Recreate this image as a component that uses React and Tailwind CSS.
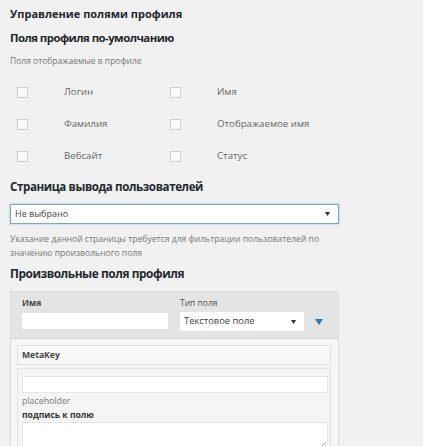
const fields = [
  ["Логин", "Имя"],
  ["Фамилия", "Отображаемое имя"],
  ["Вебсайт", "Статус"],
];

const Check = ({ label }) => (
  <div className="flex items-center h-[32px] pl-[7px]">
    <span className="w-[11px] h-[11px] border border-[#cfcfcf] bg-[#fbfbfb] shrink-0" />
    <span className="ml-[36px] text-[9.7px] text-[#666]">{label}</span>
  </div>
);

const Arrow = () => (
  <svg width="5" height="4" viewBox="0 0 5 4" className="shrink-0">
    <polygon points="0,0 5,0 2.5,4" fill="#333" />
  </svg>
);

export default function App() {
  return (
    <div
      className="min-h-screen bg-[#f1f1f1] pl-[10px] pt-[4px] text-[#23282d]"
      style={{ fontFamily: '"Open Sans", "Noto Sans", sans-serif' }}
    >
      <div className="w-[329px]">
        <h1 className="text-[11px] leading-[20px] font-bold">Управление полями профиля</h1>
        <h2 className="mt-[4px] text-[11.4px] leading-[20px] font-bold tracking-[-0.55px]">Поля профиля по-умолчанию</h2>
        <p className="mt-[6px] text-[8.5px] leading-[14px] text-[#777]">Поля отображаемые в профиле</p>

        <div className="mt-[8px] grid grid-cols-[153px_153px]">
          {fields.map(([a, b]) => (
            <div key={a} className="contents">
              <Check label={a} />
              <Check label={b} />
            </div>
          ))}
        </div>

        <h2 className="mt-[5px] text-[11.6px] leading-[20px] font-bold tracking-[-0.4px]">Страница вывода пользователей</h2>
        <div className="mt-[7px] h-[20px] flex items-center justify-between bg-white border border-[#7ea6cc] shadow-[0_0_2px_rgba(30,140,190,0.5)] pl-[4px] pr-[8px]">
          <span className="text-[9px] text-[#444]">Не выбрано</span>
          <Arrow />
        </div>
        <p className="mt-[8px] text-[8.6px] leading-[14px] text-[#777]">
          Указание данной страницы требуется для фильтрации пользователей по значению произвольного поля
        </p>

        <h2 className="mt-[3px] text-[11.9px] leading-[20px] font-bold tracking-[-0.45px]">Произвольные поля профиля</h2>

        <div className="mt-[8px] border border-[#dcdcdc] bg-[#f6f6f6]">
          <div className="h-[47px] bg-[#e4e4e4] border-b border-[#d4d4d4] flex items-start pt-[4px] pl-[11px]">
            <div className="w-[146px]">
              <div className="text-[8.5px] leading-[14px] font-bold text-[#444]">Имя</div>
              <div className="mt-[3px] h-[16px] bg-white" />
            </div>
            <div className="ml-[12px]">
              <div className="text-[8.5px] leading-[14px] text-[#555]">Тип поля</div>
              <div className="mt-[2px] w-[124px] h-[19px] bg-white flex items-center justify-between pl-[4px] pr-[8px]">
                <span className="text-[9.4px] text-[#444]">Текстовое поле</span>
                <Arrow />
              </div>
            </div>
            <svg width="8" height="6" viewBox="0 0 8 6" className="ml-[11px] mt-[23px]">
              <polygon points="0,0 8,0 4,6" fill="#2c7aa8" />
            </svg>
          </div>

          <div className="px-[6px] pt-[6px] pb-[2px] pr-[7px]">
            <div className="h-[20px] border border-[#e2e2e2] bg-[#f8f8f8] flex items-center pl-[4px]">
              <span className="text-[8.6px] font-bold text-[#444]">MetaKey</span>
            </div>
            <div className="mt-[3px] border border-[#e2e2e2] bg-[#f5f5f5] pt-[7px] px-[4px] pr-[2px]">
              <div className="h-[17px] bg-white border border-[#e6e6e6]" />
              <div className="mt-[1px] text-[8.8px] leading-[14px] text-[#777]">placeholder</div>
              <div className="text-[8.6px] leading-[14px] font-bold text-[#333]">подпись к полю</div>
              <div className="relative h-[40px] bg-white border border-[#e6e6e6]">
                <svg width="5" height="5" viewBox="0 0 5 5" className="absolute right-[1px] top-[19px]">
                  <path d="M5 0 L0 5 M5 3 L3 5" stroke="#999" strokeWidth="0.7" />
                </svg>
              </div>
            </div>
          </div>
        </div>
      </div>
    </div>
  );
}
